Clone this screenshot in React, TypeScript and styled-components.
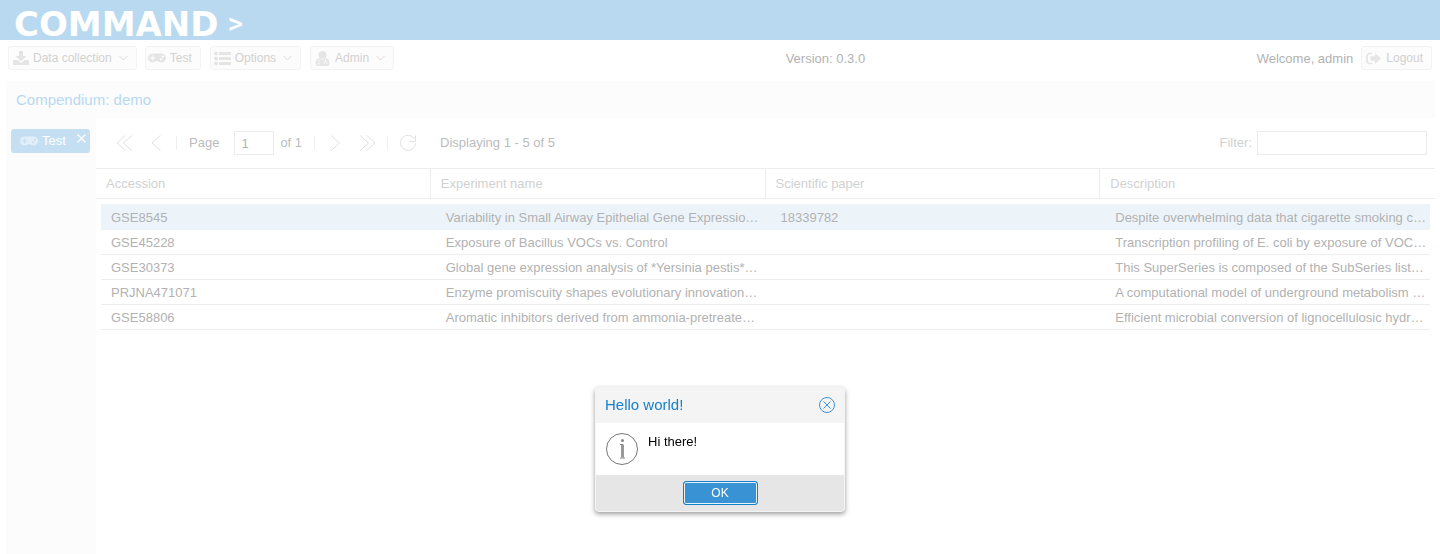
import React, { useState } from 'react';
import styled, { createGlobalStyle, css } from 'styled-components';
import { FaGamepad } from 'react-icons/fa';

const GlobalStyle = createGlobalStyle`
  *, *::before, *::after { box-sizing: border-box; }
  body {
    margin: 0;
    background: #fff;
    color: #b2b2b2;
    font: 13px/16px 'Liberation Sans', Arial, sans-serif;
  }
  button, input { font: inherit; color: inherit; margin: 0; }
`;

const Page = styled.div`
  display: flex;
  flex-direction: column;
  min-height: 100vh;
`;

const Banner = styled.header`
  display: flex;
  align-items: center;
  gap: 10px;
  height: 40px;
  padding: 7px 14px 0;
  background: #b8d9f0;
  color: #fff;
`;

const Brand = styled.h1`
  margin: 0;
  font: bold 34px/34px 'DejaVu Sans', sans-serif;
`;

const Prompt = styled.span`
  font: bold 24px/34px 'DejaVu Sans Mono', monospace;
`;

const MainBar = styled.nav`
  display: flex;
  align-items: center;
  justify-content: space-between;
  padding: 6px 8px 11px;
`;

const Group = styled.div<{ $gap: number }>`
  display: flex;
  align-items: center;
  gap: ${(p) => p.$gap}px;
`;

const BarText = styled.span`
  padding-top: 2px;
`;

const BarButton = styled.button`
  display: flex;
  align-items: center;
  gap: 4px;
  height: 24px;
  padding: 0 8px 0 3px;
  border: 1px solid #f3f3f3;
  border-radius: 3px;
  background: #fcfcfc;
  color: #d1d1d1;
  font-size: 12px;
  line-height: 16px;
`;

const IconSlot = styled.span<{ $size?: number }>`
  display: flex;
  align-items: center;
  justify-content: center;
  width: 17px;
  height: 16px;
  color: #e5e5e5;
  svg {
    flex: none;
    width: ${(p) => p.$size ?? 16}px;
    height: ${(p) => p.$size ?? 16}px;
  }
`;

const Caret = styled.svg`
  width: 9px;
  height: 6px;
  margin-left: 3px;
  fill: none;
  stroke: #d8d8d8;
`;

const PanelTitle = styled.h2`
  margin: 0 5px 0 6px;
  padding: 0 10px;
  height: 37px;
  background: #fcfcfc;
  color: #b8d9f0;
  font-size: 15px;
  font-weight: normal;
  line-height: 37px;
`;

const Workspace = styled.div`
  display: flex;
  flex: 1;
  margin: 0 5px 0 6px;
`;

const SideTabs = styled.aside`
  flex: none;
  width: 90px;
  padding: 11px 6px 0 5px;
  background: #fcfcfc;
`;

const SideTab = styled.div`
  display: flex;
  height: 24px;
  padding-left: 9px;
  border-radius: 3px;
  background: #c4dff2;
  color: #fff;
`;

const TabLabel = styled.button`
  display: flex;
  align-items: center;
  gap: 5px;
  flex: 1;
  padding: 0;
  border: 0;
  background: none;
  ${IconSlot} { color: #e3eff8; }
`;

const TabClose = styled.button`
  display: flex;
  padding: 5px 4px 0 0;
  border: 0;
  background: none;
  svg { width: 9px; height: 9px; stroke: #fff; stroke-width: 1.3; }
`;

const Content = styled.main`
  flex: 1;
  min-width: 0;
`;

const Paging = styled.div`
  display: flex;
  align-items: center;
  height: 50px;
  padding: 0 8px 0 20px;
  color: #babcbe;
`;

const PageButton = styled.button<{ $gap: number }>`
  display: flex;
  margin-right: ${(p) => p.$gap}px;
  padding: 0;
  border: 0;
  background: none;
  svg {
    width: 16px;
    height: 16px;
    fill: none;
    stroke: #e0e0e0;
  }
`;

const Separator = styled.span`
  width: 1px;
  height: 14px;
  margin-right: 12px;
  background: #f0f0f0;
`;

const Field = styled.input<{ $width: number }>`
  width: ${(p) => p.$width}px;
  height: 24px;
  padding: 1px 6px 0;
  border: 1px solid #ececec;
  background: #fff;
  color: #b2b2b2;
  outline: none;
`;

const PageLabel = styled.label`
  display: flex;
  align-items: center;
  gap: 15px;
  margin-right: 6px;
`;

const PageTotal = styled.span`
  margin-right: 12px;
`;

const PageStatus = styled.span`
  flex: 1;
  margin-left: 12px;
`;

const FilterLabel = styled.label`
  display: flex;
  align-items: center;
  gap: 5px;
  color: #d1d1d1;
`;

const Grid = styled.table`
  width: 100%;
  table-layout: fixed;
  border-collapse: separate;
  border-spacing: 0;
  tbody::before {
    content: '';
    display: block;
    height: 5px;
  }
`;

const Column = styled.col`
  width: 25%;
  &:not(:last-child) { width: calc(25% + 1px); }
`;

const HeadCell = styled.th`
  height: 31px;
  padding: 0 10px;
  border-top: 1px solid #ededed;
  border-bottom: 1px solid #ededed;
  color: #d1d1d1;
  font-weight: normal;
  text-align: left;
  &:not(:last-child) { border-right: 1px solid #ededed; }
`;

const Cell = styled.td<{ $selected: boolean }>`
  height: 25px;
  padding: 0 5px 0 15px;
  overflow: hidden;
  white-space: nowrap;
  text-overflow: ellipsis;
  background-clip: padding-box;
  box-shadow: inset 0 -1px #ededed;
  ${(p) =>
    p.$selected &&
    css`
      height: 26px;
      padding-top: 1px;
      background-color: #ecf4fa;
      box-shadow: none;
    `}
  &:first-child { border-left: 5px solid #fff; padding-left: 10px; }
  &:last-child { border-right: 5px solid #fff; padding-right: 0; }
`;

const Modal = styled.div`
  position: fixed;
  inset: 0;
  display: flex;
  align-items: flex-start;
  justify-content: center;
  padding-top: 387px;
`;

const Dialog = styled.section`
  width: 250px;
  border: 1px solid #f4f4f4;
  border-radius: 4px;
  overflow: hidden;
  background: #fff;
  box-shadow: 0 2px 5px #999;
  color: #000;
`;

const DialogHead = styled.header`
  display: flex;
  align-items: center;
  justify-content: space-between;
  height: 35px;
  padding: 0 9px 2px;
  background: #f4f4f4;
`;

const DialogTitle = styled.h3`
  margin: 0;
  color: #157fcc;
  font-size: 15px;
  font-weight: normal;
`;

const DialogClose = styled.button`
  display: flex;
  padding: 0;
  border: 0;
  background: none;
  svg { width: 16px; height: 16px; fill: none; stroke: #3f93d0; }
`;

const DialogBody = styled.div`
  display: flex;
  gap: 10px;
  height: 52px;
  padding: 10px;
  svg { flex: none; width: 32px; height: 32px; }
`;

const Message = styled.p`
  margin: 1px 0 0;
`;

const DialogFoot = styled.footer`
  display: flex;
  justify-content: center;
  padding: 6px;
  background: #e6e6e6;
`;

const OkButton = styled.button`
  width: 75px;
  height: 24px;
  padding: 0;
  border: 1px solid #157fcc;
  border-radius: 3px;
  background: #3892d3;
  box-shadow: inset 0 0 0 1px #e6f1f9;
  outline: none;
  color: #fff;
  font-size: 12px;
`;

const Arrow = () => (
  <Caret viewBox="0 0 9 6"><path d="M.3 .7l4.200 4.300L8.700 .7" /></Caret>
);

const DownloadIcon = () => (
  <svg viewBox="0 0 16 16" fill="currentColor">
    <path d="M6 1h4v5h3.500L8 11.200 2.500 6H6z" />
    <path d="M1 10h3.500L8 13l3.500-3H15a1 1 0 0 1 1 1v3a1 1 0 0 1-1 1H1a1 1 0 0 1-1-1v-3a1 1 0 0 1 1-1z" />
  </svg>
);

const DoctorIcon = () => (
  <svg viewBox="0 0 14 15" fill="currentColor">
    <circle cx="7" cy="4" r="4" />
    <path d="M3.500 7C1 7.500 0 9.500 0 12.500 0 14 1 15 2.500 15h9c1.500 0 2.500-1 2.500-2.500 0-3-1-5-3.500-5.500L7 9z" />
    <path d="M3.500 8.500v3M2.500 13.500a1 1 0 1 1 2 0M10 8.500v2M8.500 13v-1a1.500 1.500 0 0 1 3 0v1" fill="none" stroke="#fcfcfc" strokeWidth=".8" />
  </svg>
);

const ExitIcon = () => (
  <svg viewBox="0 0 15 14" fill="currentColor">
    <path d="M6 2H3.500A2.500 2.500 0 0 0 1 4.500v5A2.500 2.500 0 0 0 3.500 12H6" fill="none" stroke="currentColor" strokeWidth="1.700" />
    <path d="M4.500 4.800H9V1.500L15 7l-6 5.500V9.200H4.500z" />
  </svg>
);

const ListIcon = () => (
  <svg viewBox="0 0 17 16" fill="currentColor">
    {[3, 8, 13].map((y) => (
      <g key={y}>
        <circle cx="2" cy={y} r="2" />
        <rect x="5" y={y - 1.5} width="12" height="3" rx=".6" />
      </g>
    ))}
  </svg>
);

const pagePaths = {
  first: 'M9.500 .3L1 8l8.500 7.700M16 .3L7.500 8l8.500 7.700',
  prev: 'M12.500 .3L4 8l8.500 7.700',
  next: 'M4 .3L12.500 8l-8.500 7.700',
  last: 'M1 .3L9.500 8l-8.500 7.700M7.500 .3L16 8l-8.500 7.700',
  refresh: 'M14.500 4A7.500 7.500 0 1 0 15.500 8.500M15.500 .5v6h-6',
};

const PageNav = ({ kind, label, gap }: { kind: keyof typeof pagePaths; label: string; gap: number }) => (
  <PageButton type="button" aria-label={label} $gap={gap}>
    <svg viewBox="0 0 16 16"><path d={pagePaths[kind]} /></svg>
  </PageButton>
);

const columns = ['Accession', 'Experiment name', 'Scientific paper', 'Description'];

const rows = [
  ['GSE8545', 'Variability in Small Airway Epithelial Gene Expression Among', '18339782', 'Despite overwhelming data that cigarette smoking causes chronic'],
  ['GSE45228', 'Exposure of Bacillus VOCs vs. Control', '', 'Transcription profiling of E. coli by exposure of VOCs from Bacillus'],
  ['GSE30373', 'Global gene expression analysis of *Yersinia pestis* grown', '', 'This SuperSeries is composed of the SubSeries listed below.'],
  ['PRJNA471071', 'Enzyme promiscuity shapes evolutionary innovation and optimization', '', 'A computational model of underground metabolism and laboratory evolution'],
  ['GSE58806', 'Aromatic inhibitors derived from ammonia-pretreated lignocellulose', '', 'Efficient microbial conversion of lignocellulosic hydrolysates to biofuels'],
];

export default function App() {
  const [open, setOpen] = useState(true);
  const close = () => setOpen(false);

  return (
    <>
      <GlobalStyle />
      <Page>
        <Banner>
          <Brand>COMMAND</Brand>
          <Prompt>&gt;</Prompt>
        </Banner>

        <MainBar>
          <Group $gap={9}>
            <Group $gap={8}>
              <BarButton type="button">
                <IconSlot><DownloadIcon /></IconSlot>Data collection<Arrow />
              </BarButton>
              <BarButton type="button">
                <IconSlot $size={18}><FaGamepad /></IconSlot>Test
              </BarButton>
            </Group>
            <BarButton type="button">
              <IconSlot $size={17}><ListIcon /></IconSlot>Options<Arrow />
            </BarButton>
            <BarButton type="button">
              <IconSlot $size={15}><DoctorIcon /></IconSlot>Admin<Arrow />
            </BarButton>
          </Group>
          <BarText>Version: 0.3.0</BarText>
          <Group $gap={8}>
            <BarText>Welcome, admin</BarText>
            <BarButton type="button">
              <IconSlot $size={15}><ExitIcon /></IconSlot>Logout
            </BarButton>
          </Group>
        </MainBar>

        <PanelTitle>Compendium: demo</PanelTitle>
        <Workspace>
          <SideTabs>
            <SideTab>
              <TabLabel type="button">
                <IconSlot $size={18}><FaGamepad /></IconSlot>Test
              </TabLabel>
              <TabClose type="button" aria-label="Close tab">
                <svg viewBox="0 0 9 9"><path d="M.5.5l8 8M8.500 .5l-8 8" /></svg>
              </TabClose>
            </SideTab>
          </SideTabs>

          <Content>
            <Paging>
              <PageNav kind="first" label="First page" gap={16} />
              <PageNav kind="prev" label="Previous page" gap={12} />
              <Separator />
              <PageLabel>
                Page
                <Field $width={40} defaultValue="1" />
              </PageLabel>
              <PageTotal>of 1</PageTotal>
              <Separator />
              <PageNav kind="next" label="Next page" gap={16} />
              <PageNav kind="last" label="Last page" gap={12} />
              <Separator />
              <PageNav kind="refresh" label="Refresh" gap={12} />
              <PageStatus>Displaying 1 - 5 of 5</PageStatus>
              <FilterLabel>
                Filter:
                <Field $width={170} />
              </FilterLabel>
            </Paging>
            <Grid>
              <colgroup>{columns.map((c) => <Column key={c} />)}</colgroup>
              <thead>
                <tr>{columns.map((c) => <HeadCell key={c} scope="col">{c}</HeadCell>)}</tr>
              </thead>
              <tbody>
                {rows.map((row, r) => (
                  <tr key={row[0]} aria-selected={r === 0}>
                    {row.map((text, c) => <Cell key={columns[c]} $selected={r === 0}>{text}</Cell>)}
                  </tr>
                ))}
              </tbody>
            </Grid>
          </Content>
        </Workspace>
      </Page>

      {open && (
        <Modal>
          <Dialog role="dialog" aria-modal="true" aria-labelledby="dialog-title">
            <DialogHead>
              <DialogTitle id="dialog-title">Hello world!</DialogTitle>
              <DialogClose type="button" aria-label="Close" onClick={close}>
                <svg viewBox="0 0 16 16">
                  <circle cx="8" cy="8" r="7.5" />
                  <path d="M4.500 4.500l7 7M11.500 4.500l-7 7" />
                </svg>
              </DialogClose>
            </DialogHead>
            <DialogBody>
              <svg viewBox="0 0 32 32" fill="none" stroke="#777">
                <circle cx="16" cy="16" r="15.500" />
                <circle cx="16.500" cy="7.500" r="1.500" fill="#888" stroke="none" />
                <path d="M16.500 11.500v13" stroke="#999" strokeWidth="3" />
                <path d="M14 11.500h3M14 25h5" stroke="#888" />
              </svg>
              <Message>Hi there!</Message>
            </DialogBody>
            <DialogFoot>
              <OkButton type="button" onClick={close}>OK</OkButton>
            </DialogFoot>
          </Dialog>
        </Modal>
      )}
    </>
  );
}
